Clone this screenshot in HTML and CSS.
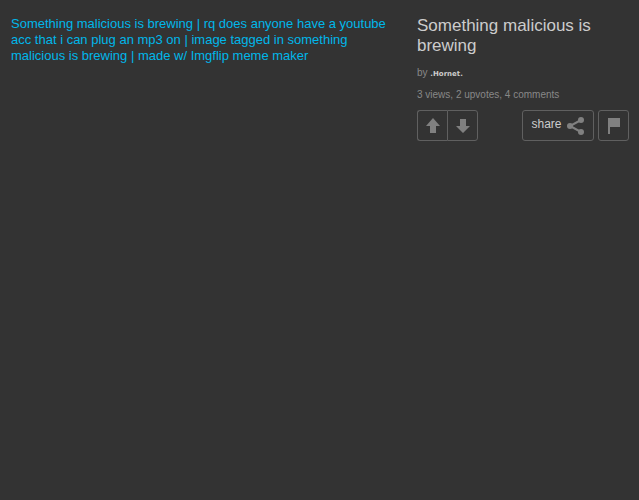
FILE: index.html
```html
<!DOCTYPE html>
<html lang="en">
<head>
    <meta charset="UTF-8">
    <meta name="viewport" content="width=device-width, initial-scale=1.0">
    <title>Something malicious is brewing - Imgflip</title>
    <link rel="stylesheet" href="styles.css">
</head>
<body>
    <main id="page">
        <div id="img-main">
            <a href="#">Something malicious is brewing | rq does anyone have a youtube acc that i can plug an mp3 on | image tagged in something malicious is brewing | made w/ Imgflip meme maker</a>
        </div>

        <aside id="img-info">
            <h1>Something malicious is brewing</h1>
            <div class="img-author">by <a href="#">.Hornet.</a></div>
            <div class="img-views">3 views, 2 upvotes, 4 comments</div>
            <div class="img-actions">
                <div class="img-vote">
                    <button type="button" class="btn" aria-label="Upvote">
                        <svg width="14" height="16" viewBox="0 0 14 16"><path d="M7 0L14 8H10V15H4V8H0Z"/></svg>
                    </button>
                    <button type="button" class="btn" aria-label="Downvote">
                        <svg width="14" height="16" viewBox="0 0 14 16"><path d="M7 15L0 8H4V1H10V8H14Z"/></svg>
                    </button>
                </div>
                <button type="button" class="btn share">
                    <span>share</span>
                    <svg width="18" height="18" viewBox="0 0 18 18">
                        <path class="line" d="M14 3L3 9L14 15"/>
                        <circle cx="14" cy="3" r="3"/>
                        <circle cx="3" cy="9" r="3"/>
                        <circle cx="14" cy="15" r="3"/>
                    </svg>
                </button>
                <button type="button" class="btn" aria-label="Flag">
                    <svg width="14" height="16" viewBox="0 0 14 16"><path d="M1 0H13V9H3V16H1Z"/></svg>
                </button>
            </div>
        </aside>
    </main>
</body>
</html>
```
FILE: styles.css
```css
body {
    margin: 0;
    background: #333;
    color: #ccc;
    font-family: "Liberation Sans", Arial, sans-serif;
}
#page {
    display: flex;
    gap: 20px;
    padding: 16px 10px 16px 11px;
}
#img-main {
    flex: 1;
    font-size: 13px;
    line-height: 16px;
}
#img-main a {
    color: #00b7ea;
    text-decoration: none;
}
#img-info {
    width: 212px;
}
#img-info h1 {
    margin: 0 0 11px;
    font-size: 17px;
    font-weight: normal;
    line-height: 20px;
}
.img-author, .img-views {
    color: #888;
    font-size: 10px;
    line-height: 12px;
}
.img-author {
    margin-bottom: 9px;
}
.img-author a {
    color: #ccc;
    font-family: "DejaVu Sans", Verdana, sans-serif;
    font-size: 7px;
    font-weight: bold;
    text-decoration: none;
}
.img-actions {
    display: flex;
    gap: 4px;
    margin-top: 9px;
}
.img-vote {
    display: flex;
    margin-right: auto;
}
.btn {
    box-sizing: border-box;
    display: flex;
    align-items: center;
    justify-content: center;
    gap: 5px;
    width: 31px;
    height: 31px;
    padding: 0;
    border: 1px solid #606060;
    border-radius: 3px;
    background: none;
    color: #ccc;
    font-family: inherit;
    font-size: 12px;
    cursor: pointer;
}
.btn svg {
    fill: #808080;
}
.btn .line {
    fill: none;
    stroke: #808080;
    stroke-width: 2;
}
.img-vote .btn:first-child {
    width: 30px;
    border-right: 0;
    border-radius: 3px 0 0 3px;
}
.img-vote .btn:last-child {
    border-radius: 0 3px 3px 0;
}
.share {
    width: 72px;
}
.share span {
    padding-bottom: 3px;
}
```
